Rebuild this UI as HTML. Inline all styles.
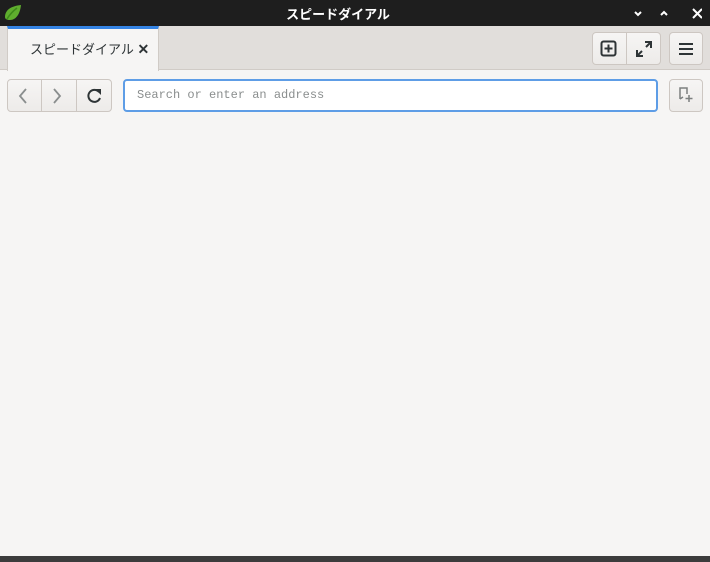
<!DOCTYPE html>
<html><head><meta charset="utf-8"><style>
*{margin:0;padding:0;box-sizing:border-box}
body{width:710px;height:562px;overflow:hidden;background:#f6f5f4;font-family:"Liberation Sans","Noto Sans CJK JP",sans-serif;position:relative}
.abs{position:absolute}
.btn{position:absolute;border:1px solid #cdc7c2;background:linear-gradient(#f6f5f4,#edebe9);border-radius:4px}
</style></head><body>
<div class="abs" style="left:0;top:0;width:710px;height:26px;background:#1e1e1e"></div>
<svg class="abs" style="left:3px;top:3px" width="20" height="20" viewBox="0 0 20 20"><path d="M2 14C2 7 8 3 18 2C17 11 13 17 7 17C4 17 2 16 2 14Z" fill="#5fae2e"/><path d="M4 16C7 11 10 8 14 5" stroke="#3d8a1a" stroke-width="1.5" fill="none"/></svg>
<div class="abs" style="left:286px;width:104px;top:4px;text-align:center;color:#fff;font-size:13px;font-weight:bold;white-space:nowrap">スピードダイアル</div>
<svg class="abs" style="left:632px;top:8px" width="70" height="12" viewBox="0 0 70 12"><path d="M3 4L6 7L9 4" stroke="#fff" stroke-width="2" fill="none"/><path d="M29 7L32 4L35 7" stroke="#fff" stroke-width="2" fill="none"/><path d="M61 1L70 10M70 1L61 10" stroke="#fff" stroke-width="2"/></svg>
<div class="abs" style="left:0;top:26px;width:710px;height:44px;background:#e1dedb;border-bottom:1px solid #d0cbc6"></div>
<div class="abs" style="left:7px;top:26px;width:152px;height:45px;background:#f6f5f4;border-left:1px solid #d0cbc6;border-right:1px solid #d0cbc6;border-top:3px solid #3584e4"></div>
<div class="abs" style="left:30px;top:39px;font-size:13px;color:#2e3436">スピードダイアル <b style="font-size:14px">✕</b></div>
<div class="btn" style="left:592px;top:32px;width:69px;height:33px"></div>
<div class="abs" style="left:626px;top:33px;width:1px;height:31px;background:#cdc7c2"></div>
<svg class="abs" style="left:600px;top:40px" width="18" height="18" viewBox="0 0 18 18"><rect x="1.5" y="1.5" width="14" height="14" rx="2" stroke="#2e3436" stroke-width="2" fill="none"/><path d="M8.5 4.5v8M4.5 8.5h8" stroke="#2e3436" stroke-width="2"/></svg>
<svg class="abs" style="left:635px;top:40px" width="18" height="18" viewBox="0 0 18 18"><path d="M10 2h6v6M16 2l-5 5M8 16H2v-6M2 16l5-5" stroke="#2e3436" stroke-width="2" fill="none"/></svg>
<div class="btn" style="left:669px;top:32px;width:34px;height:33px"></div>
<svg class="abs" style="left:678px;top:42px" width="16" height="14" viewBox="0 0 16 14"><path d="M1 2h14M1 7h14M1 12h14" stroke="#2e3436" stroke-width="2"/></svg>
<div class="btn" style="left:7px;top:79px;width:105px;height:33px"></div>
<div class="abs" style="left:41px;top:80px;width:1px;height:31px;background:#cdc7c2"></div>
<div class="abs" style="left:76px;top:80px;width:1px;height:31px;background:#cdc7c2"></div>
<svg class="abs" style="left:16px;top:86px" width="90" height="20" viewBox="0 0 90 20"><path d="M10 3L4 10L10 17" stroke="#8a8e8e" stroke-width="1.8" fill="none"/><path d="M38 3L44 10L38 17" stroke="#8a8e8e" stroke-width="1.8" fill="none"/><path d="M83 6A6 6 0 1 0 84 12" stroke="#2e3436" stroke-width="2" fill="none"/><path d="M79 3L85 3L85 9Z" fill="#2e3436"/></svg>
<div class="abs" style="left:123px;top:79px;width:535px;height:33px;background:#fff;border:2px solid #5e9de6;border-radius:4px"></div>
<div class="abs" style="left:137px;top:88px;font-family:'Liberation Mono',monospace;font-size:12px;color:#8a8e8e">Search or enter an address</div>
<div class="btn" style="left:669px;top:79px;width:34px;height:33px"></div>
<svg class="abs" style="left:677px;top:86px" width="18" height="18" viewBox="0 0 18 18"><path d="M3 13V2h7v6M3 13l3-2" stroke="#7c7f7f" stroke-width="1.5" fill="none"/><path d="M12 9v7M8.5 12.5h7" stroke="#7c7f7f" stroke-width="1.5"/></svg>
<div class="abs" style="left:0;top:556px;width:710px;height:6px;background:#3c3c3c"></div>
</body></html>
